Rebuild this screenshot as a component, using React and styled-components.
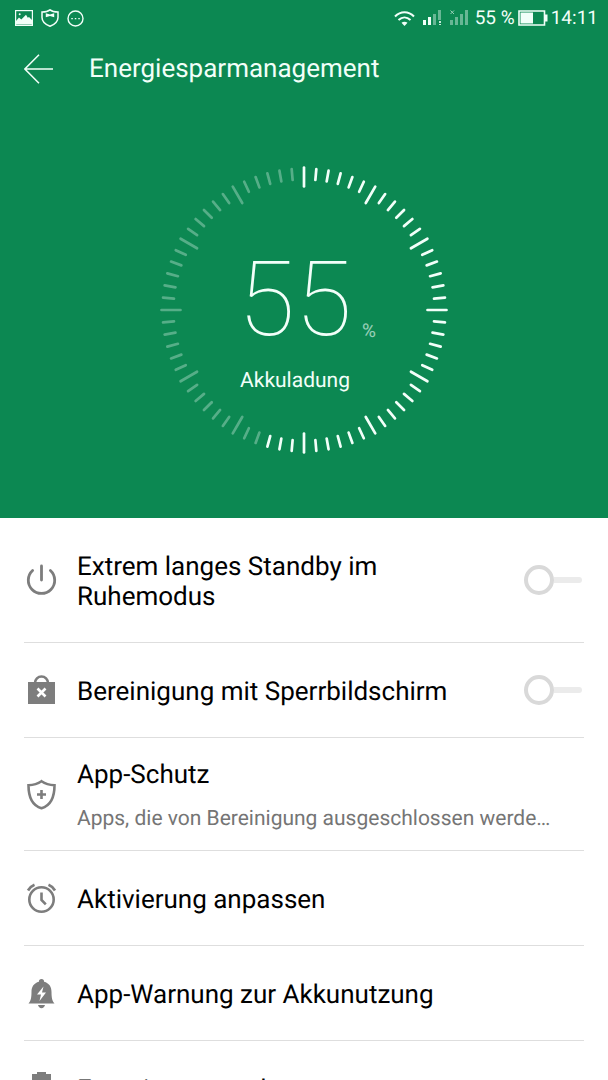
import React from "react";
import styled, { createGlobalStyle } from "styled-components";

const GREEN = "#0c8852";
const ICON_GRAY = "#7d7d7d";

const GlobalStyle = createGlobalStyle`
    *,
    *::before,
    *::after {
        box-sizing: border-box;
    }
    body {
        margin: 0;
        background: #fff;
        font-family: Roboto, "Noto Sans", sans-serif;
        text-rendering: geometricPrecision;
    }
`;

const Screen = styled.div`
    display: flex;
    flex-direction: column;
    height: 100vh;
    overflow: hidden;
`;

const Hero = styled.header`
    flex: none;
    display: flex;
    flex-direction: column;
    padding-bottom: 63px;
    background: ${GREEN};
    color: #f2fff9;
`;

const StatusBar = styled.div`
    display: flex;
    align-items: center;
    justify-content: space-between;
    height: 36px;
    padding: 0 10px 0 15px;
    font-size: 19px;
    line-height: 24px;
`;

const StatusGroup = styled.div`
    display: flex;
    align-items: center;
    gap: ${({ $gap }) => $gap}px;
`;

const Toolbar = styled.div`
    display: flex;
    align-items: center;
    gap: 35px;
    height: 66px;
    padding: 0 24px;
`;

const BackButton = styled.button`
    display: flex;
    padding: 0;
    border: 0;
    background: none;
    color: inherit;
    cursor: pointer;
`;

const Title = styled.h1`
    margin: 0;
    font-size: 26px;
    font-weight: 400;
    line-height: 30px;
`;

const Gauge = styled.div`
    display: grid;
    place-items: center;
    margin-top: 63px;
    > * {
        grid-area: 1 / 1;
    }
`;

const GaugeText = styled.div`
    display: flex;
    flex-direction: column;
    align-items: center;
    width: 288px;
    padding: 22px 18px 0 0;
`;

const GaugeValue = styled.div`
    position: relative;
    font-size: 104px;
    font-weight: 100;
    line-height: 104px;
`;

const GaugeUnit = styled.span`
    position: absolute;
    left: 100%;
    bottom: 10px;
    padding-left: 10px;
    font-size: 19px;
    font-weight: 400;
    line-height: 24px;
    opacity: 0.6;
`;

const GaugeLabel = styled.div`
    margin-top: 16px;
    font-size: 21px;
    line-height: 24px;
`;

const List = styled.ul`
    flex: 1;
    min-height: 0;
    margin: 0;
    padding: 0 24px;
    overflow: hidden;
    list-style: none;
`;

const Row = styled.li`
    display: flex;
    align-items: center;
    padding: 0 2px;
    border-bottom: 1px solid #dedede;
    color: #000;
    svg {
        flex: none;
    }
`;

const RowText = styled.div`
    flex: 1;
    min-width: 0;
    padding: 34px 64px 30px 20px;
`;

const HintText = styled(RowText)`
    padding: 22px 24px 18px 20px;
`;

const RowTitle = styled.label`
    display: block;
    font-size: 26px;
    line-height: 30px;
`;

const RowHint = styled.div`
    margin-top: 16px;
    overflow: hidden;
    color: #757575;
    font-size: 21px;
    line-height: 26px;
    text-overflow: ellipsis;
    white-space: nowrap;
`;

const Switch = styled.input`
    appearance: none;
    flex: none;
    display: flex;
    align-items: center;
    width: 58px;
    height: 30px;
    margin: 0;
    cursor: pointer;
    &::before {
        content: "";
        width: 30px;
        height: 30px;
        border: 4px solid #d9d9d9;
        border-radius: 50%;
    }
    &::after {
        content: "";
        flex: 1;
        height: 6px;
        border-radius: 0 3px 3px 0;
        background: #ebebeb;
    }
    &:checked {
        flex-direction: row-reverse;
    }
    &:checked::before {
        border-color: ${GREEN};
    }
`;

const BackIcon = () => (
    <svg width="30" height="30" viewBox="0 0 30 30" fill="none" stroke="currentColor" strokeWidth="1.5">
        <path d="M15 .7.9 15 15 29.3M.9 15H29" />
    </svg>
);

const PictureIcon = () => (
    <svg width="18" height="16" viewBox="0 0 18 16">
        <rect x=".6" y=".6" width="16.8" height="14.8" fill="none" stroke="currentColor" strokeWidth="1.2" />
        <path d="M1 14.5V11l3-3.6 2.3 2L11 4.8l1.8 3 1.2-.7 3 3v4.4z" fill="currentColor" />
        <circle cx="4.7" cy="4.2" r="1" fill="currentColor" />
    </svg>
);

const GuardIcon = () => (
    <svg width="18" height="18" viewBox="0 0 18 18">
        <path
            d="M9 .8C7 2.4 4.5 3 1 3.1v5.4c0 4.4 3.5 7 8 8.8 4.5-1.8 8-4.4 8-8.8V3.1C13.5 3 11 2.4 9 .8z"
            fill="none"
            stroke="currentColor"
            strokeWidth="1.5"
        />
        <path d="M4.8 4.3 9 5.5l4.200-1.200v4L9 7 4.800 8.300z" fill="currentColor" />
    </svg>
);

const DotsIcon = () => (
    <svg width="17" height="17" viewBox="0 0 17 17">
        <circle cx="8.5" cy="8.5" r="7.5" fill="none" stroke="currentColor" strokeWidth="1.4" />
        <path d="M4.300 8h1.500v1.300H4.300zM7.800 8h1.500v1.300H7.800zM11.300 8h1.500v1.300h-1.500z" fill="currentColor" />
    </svg>
);

const WifiIcon = () => (
    <svg width="21" height="15" viewBox="0 0 21 15" fill="none" stroke="currentColor" strokeWidth="2">
        <path d="M1 5.5C6.5-.2 14.5-.2 20 5.5M4.5 9c3.7-3.5 8.3-3.5 12 0" />
        <path d="m10.5 15-3-3.200c1.800-1.500 4.200-1.500 6 0z" fill="currentColor" stroke="none" />
    </svg>
);

const SignalIcon = ({ off }) => (
    <svg width="19" height="16" viewBox="0 0 19 16" fill="currentColor">
        <g opacity={off ? 0.4 : 1}>
            <path d="M0 10h3v5H0zM5 7h3v8H5z" />
        </g>
        <g opacity=".4">
            <path d="M10 4h3v11h-3zM15 0h3v10h-3z" />
        </g>
        {off ? (
            <>
                <path d="M15 10h3v5h-3z" opacity=".4" />
                <path d="m.5.5 3.500 3.500M4 .5.5 4" stroke="currentColor" opacity=".6" />
            </>
        ) : (
            <path d="M16 11h2v2h-2zM16 14h2v1h-2z" opacity=".8" />
        )}
    </svg>
);

const BatteryIcon = () => (
    <svg width="30" height="16" viewBox="0 0 30 16">
        <path d="M1 1h25.5v14H1z" fill="none" stroke="currentColor" strokeWidth="1.6" />
        <path d="M2.5 2.5H15v11H2.5zM27 4.5h2.500v7H27z" fill="currentColor" />
    </svg>
);

const PowerIcon = () => (
    <svg width="31" height="34" viewBox="0 0 31 34" fill="none" stroke={ICON_GRAY} strokeWidth="2.8" strokeLinecap="round">
        <path d="M15.5 3v14M6.600 7.500a13.200 13.200 0 1 0 17.800 0" />
    </svg>
);

const BagIcon = () => (
    <svg width="31" height="30" viewBox="0 0 31 30" fill="none" stroke={ICON_GRAY} strokeWidth="2.6">
        <path d="M2 7h27v22H2z" fill={ICON_GRAY} stroke="none" />
        <path d="M9 8c0-3.700 3-6.500 6.500-6.500S22 4.300 22 8" />
        <path d="m11.500 13.500 8 8m0-8-8 8" stroke="#fff" />
    </svg>
);

const ShieldIcon = () => (
    <svg width="31" height="31" viewBox="0 0 31 31" fill="none" stroke={ICON_GRAY} strokeWidth="2.6">
        <path d="M15.500 2.200C12 4.600 7.500 6 2.500 6.200c0 10.500 2.500 20 13 23 10.500-3 13-12.500 13-23-5-.2-9.500-1.600-13-4z" />
        <path d="M15.500 11v9M11 15.500h9" />
    </svg>
);

const AlarmIcon = () => (
    <svg width="31" height="30" viewBox="0 0 31 30" fill="none" stroke={ICON_GRAY} strokeWidth="2.6">
        <circle cx="15.5" cy="16.5" r="12.2" />
        <path d="M15.500 9.500v7.500l4.300 4.300M2 7.500C3.500 4.800 5.600 3 8.500 1.800M29 7.500c-1.500-2.700-3.600-4.500-6.500-5.700" />
    </svg>
);

const BellIcon = () => (
    <svg width="31" height="31" viewBox="0 0 31 31" fill={ICON_GRAY}>
        <path d="M15.500 1c1.700 0 2.600 1.100 2.600 2.700 4.900 1.300 7.400 5 7.400 10 0 6.300.7 9 3 11.800h-26c2.300-2.800 3-5.500 3-11.800 0-5 2.500-8.700 7.400-10C12.900 2.100 13.800 1 15.500 1zM12 27h7c-.4 2-1.800 3.200-3.500 3.200S12.400 29 12 27z" />
        <path d="m17.500 8.500-6.500 8h4l-1.500 6.500 6.500-8.500h-4z" fill="#fff" />
    </svg>
);

const BatteryRowIcon = () => (
    <svg width="31" height="34" viewBox="0 0 31 34" fill={ICON_GRAY}>
        <path d="M11 1h9v2h5v30H6V3h5z" />
    </svg>
);

const Dial = ({ percent }) => {
    const ticks = Array.from({ length: 72 }, (_, i) => i);
    return (
        <svg width="290" height="290" viewBox="-145 -145 290 290" stroke="currentColor" strokeLinecap="round">
            {ticks.map((i) => (
                <line
                    key={i}
                    y1={i % 6 ? -141.5 : -142.5}
                    y2={i % 6 ? -130.5 : -123.5}
                    strokeWidth="2.7"
                    opacity={i / 72 <= percent / 100 ? 1 : 0.32}
                    transform={`rotate(${i * 5})`}
                />
            ))}
        </svg>
    );
};

const items = [
    { id: "standby", icon: PowerIcon, title: "Extrem langes Standby im Ruhemodus", toggle: true },
    { id: "lock", icon: BagIcon, title: "Bereinigung mit Sperrbildschirm", toggle: true },
    {
        id: "guard",
        icon: ShieldIcon,
        title: "App-Schutz",
        hint: "Apps, die von Bereinigung ausgeschlossen werden sollen",
    },
    { id: "wakeup", icon: AlarmIcon, title: "Aktivierung anpassen" },
    { id: "warning", icon: BellIcon, title: "App-Warnung zur Akkunutzung" },
    { id: "mode", icon: BatteryRowIcon, title: "Energiesparmodus" },
];

const SettingRow = ({ item }) => {
    const Icon = item.icon;
    const Text = item.hint ? HintText : RowText;
    return (
        <Row>
            <Icon />
            <Text>
                <RowTitle
                    as={item.toggle ? "label" : "div"}
                    htmlFor={item.toggle ? item.id : undefined}
                >
                    {item.title}
                </RowTitle>
                {item.hint && <RowHint>{item.hint}</RowHint>}
            </Text>
            {item.toggle && <Switch type="checkbox" id={item.id} />}
        </Row>
    );
};

const App = () => (
    <>
        <GlobalStyle />
        <Screen>
            <Hero>
                <StatusBar>
                    <StatusGroup $gap={8}>
                        <PictureIcon />
                        <GuardIcon />
                        <DotsIcon />
                    </StatusGroup>
                    <StatusGroup $gap={6}>
                        <StatusGroup $gap={8}>
                            <WifiIcon />
                            <SignalIcon />
                            <SignalIcon off />
                        </StatusGroup>
                        <StatusGroup $gap={3}>
                            <span>55 %</span>
                            <BatteryIcon />
                            <span>14:11</span>
                        </StatusGroup>
                    </StatusGroup>
                </StatusBar>
                <Toolbar>
                    <BackButton type="button" aria-label="Zurück">
                        <BackIcon />
                    </BackButton>
                    <Title>Energiesparmanagement</Title>
                </Toolbar>
                <Gauge>
                    <Dial percent={55} />
                    <GaugeText>
                        <GaugeValue>
                            55<GaugeUnit>%</GaugeUnit>
                        </GaugeValue>
                        <GaugeLabel>Akkuladung</GaugeLabel>
                    </GaugeText>
                </Gauge>
            </Hero>
            <List>
                {items.map((item) => (
                    <SettingRow key={item.id} item={item} />
                ))}
            </List>
        </Screen>
    </>
);

export default App;
